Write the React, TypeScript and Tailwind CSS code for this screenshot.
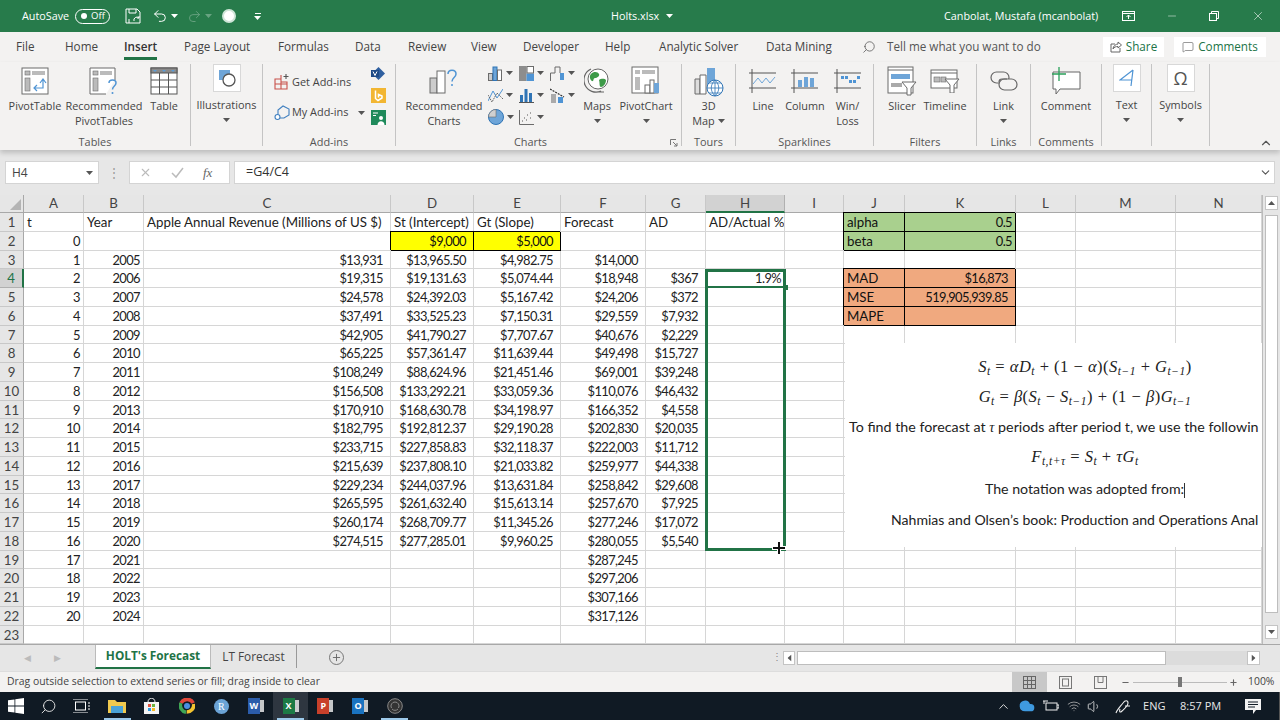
import { Search, Undo2, Redo2, X, Minus, Plus, ChevronUp, ChevronDown, Volume1, Wifi, MessageSquare, Cloud } from 'lucide-react';
import type { ReactNode } from 'react';

const UI = "font-['Open_Sans',sans-serif]";
const SHEET = "font-['Lato',sans-serif]";

const Caret = ({ c = '#555' }: { c?: string }) => (
  <svg width="7" height="4" viewBox="0 0 7 4" className="shrink-0"><path d="M0 0h7L3.5 4z" fill={c} /></svg>
);

const G = '#6b6b6b';
const B = '#4f94d4';

/* ---------- ribbon icons ---------- */
const PivotIcon = () => (
  <svg width="28" height="28" viewBox="0 0 28 28" fill="none">
    <rect x="1" y="1" width="26" height="26" fill="#fff" stroke={G} />
    <rect x="4" y="4" width="5" height="4" fill="#bbb" stroke={G} strokeWidth=".6" />
    <rect x="11" y="4" width="13" height="4" fill="#bbb" />
    <rect x="4" y="11" width="5" height="13" fill="#bbb" stroke={G} strokeWidth=".6" />
    <path d="M13 21h9v-8m-3 3l3-4 3 4M16 18l-3 3 3 3" stroke={B} strokeWidth="1.2" />
  </svg>
);
const RecPivotIcon = () => (
  <svg width="30" height="30" viewBox="0 0 30 30" fill="none">
    <path d="M26 14V2H1v26h16" fill="#fff" stroke={G} />
    <rect x="4" y="5" width="5" height="4" fill="#bbb" stroke={G} strokeWidth=".6" />
    <rect x="11" y="5" width="12" height="4" fill="#bbb" />
    <rect x="4" y="12" width="5" height="13" fill="#bbb" stroke={G} strokeWidth=".6" />
    <path d="M20 17c0-4 7-4 7 0 0 3-3.500 3-3.500 6.500" stroke={B} strokeWidth="1.500" />
    <circle cx="23.500" cy="27" r="1" fill={B} />
  </svg>
);
const TableIcon = () => (
  <svg width="28" height="28" viewBox="0 0 28 28" fill="none" stroke="#555">
    <rect x="1" y="1" width="26" height="26" fill="#fff" />
    <rect x="1" y="1" width="26" height="5" fill="#8a8a8a" />
    <path d="M1 13h26M1 20h26M9.500 6v21M18.500 6v21" />
    <path d="M3 3h4l-2 2zM12 3h4l-2 2zM21 3h4l-2 2z" fill="#5b9bd5" stroke="none" />
  </svg>
);
const ShapesIcon = () => (
  <svg width="20" height="20" viewBox="0 0 20 20" fill="none">
    <rect x="2" y="2" width="11" height="10" fill="#6ea5d8" />
    <circle cx="12" cy="12" r="6" fill="#fff" stroke="#555" strokeWidth="1.300" />
  </svg>
);
const GetAddIns = () => (
  <svg width="16" height="16" viewBox="0 0 16 16" fill="none" stroke="#c8504a" strokeWidth="1.100">
    <path d="M1 5h6v10H1zM7 8h6v7H7zM1 10h12M7 1v4" />
    <path d="M12 0v5M9.500 2.500h5" stroke="#555" />
  </svg>
);
const MyAddIns = () => (
  <svg width="16" height="16" viewBox="0 0 16 16" fill="none" stroke="#3f7fbf" strokeWidth="1.100">
    <path d="M4 9V5l5-4 6 3v6l-5 3H6" />
    <circle cx="3.500" cy="12" r="2.500" fill="#fff" />
  </svg>
);
const Visio = () => (
  <svg width="15" height="15" viewBox="0 0 15 15"><path d="M7.500 1L14 7.500 7.500 14 1 7.500z" fill="#2f5f9f" /><path d="M0 4h8v7H0z" fill="#1f4b87" /><path d="M2 5.500l2 4 2-4" stroke="#fff" fill="none" /></svg>
);
const Bing = () => (
  <svg width="15" height="15" viewBox="0 0 15 15"><rect width="15" height="15" fill="#f2b632" /><path d="M4.500 2.500v8l2.500 2 4-2.500v-2L7.500 6.500v3" stroke="#fff" strokeWidth="1.500" fill="none" /></svg>
);
const People = () => (
  <svg width="15" height="15" viewBox="0 0 15 15"><rect width="15" height="15" fill="#1f8a5b" /><circle cx="10" cy="8" r="2" fill="#fff" /><path d="M6.500 15c0-5 7-5 7 0z" fill="#fff" /><path d="M2 3h5M2 5.500h3" stroke="#fff" /></svg>
);
const RecChart = () => (
  <svg width="30" height="30" viewBox="0 0 30 30" fill="none">
    <rect x="1" y="12" width="7" height="15" fill="#ccc" stroke={G} />
    <rect x="8" y="5" width="8" height="22" fill="#fff" stroke={G} />
    <path d="M19 8c0-5 8-5 8 0 0 3.500-4 3.500-4 7.500" stroke={B} strokeWidth="1.500" />
    <circle cx="23" cy="19" r="1" fill={B} />
  </svg>
);
const MiniBars = () => (
  <svg width="15" height="15" viewBox="0 0 15 15" fill="none" stroke={G}>
    <rect x=".5" y="7.500" width="4" height="7" fill="#ccc" /><rect x="5" y="1" width="4" height="13.500" fill="#6ea5d8" stroke="#2f74b5" /><rect x="9.500" y="4" width="4" height="10.500" fill="#fff" />
  </svg>
);
const MiniHier = () => (
  <svg width="15" height="15" viewBox="0 0 15 15"><rect x="0" y="0" width="7.500" height="15" fill="#8d8d8d" /><rect x="7.500" y="7.500" width="7.500" height="7.500" fill="#4f94d4" /><rect x="8" y=".5" width="6.500" height="6.500" fill="#fff" stroke={G} /></svg>
);
const MiniFall = () => (
  <svg width="15" height="15" viewBox="0 0 15 15" fill="none" stroke={G}><path d="M.5 15V7H5V1h5v6" /><rect x="10" y="7" width="4" height="7" fill="#4f94d4" stroke="none" /></svg>
);
const MiniLine = () => (
  <svg width="15" height="15" viewBox="0 0 15 15" fill="none"><path d="M0 13L5 3l4 7 6-9" stroke="#4f94d4" /><path d="M0 7l4 7 5-9 6 6" stroke="#666" strokeDasharray="1.500 .8" /></svg>
);
const MiniBlue = () => (
  <svg width="15" height="15" viewBox="0 0 15 15"><rect x="1" y="7" width="3" height="7" fill="#2f74b5" /><rect x="5.500" y="1" width="3" height="13" fill="#2f74b5" /><rect x="10" y="5" width="3" height="9" fill="#2f74b5" /><path d="M0 14.500h15" stroke="#555" /></svg>
);
const MiniCombo = () => (
  <svg width="15" height="15" viewBox="0 0 15 15" fill="none"><rect x="1" y="6" width="5" height="9" fill="#aaa" /><rect x="8" y="9" width="5" height="6" fill="#4f94d4" /><path d="M0 1l7 4 7 4" stroke="#333" strokeWidth="1.300" strokeDasharray="2 1" /></svg>
);
const MiniPie = () => (
  <svg width="16" height="16" viewBox="0 0 16 16"><circle cx="8" cy="8" r="7.500" fill="#6ea5d8" stroke="#2f74b5" /><path d="M8 8V.5A7.500 7.500 0 0 0 .5 8z" fill="#d0d0d0" stroke={G} strokeWidth=".6" /></svg>
);
const MiniScatter = () => (
  <svg width="15" height="15" viewBox="0 0 15 15" fill="none"><path d="M.5 0v14.500H15" stroke={G} /><path d="M3 11h1M5 8h1M7 10h1M8 5h1M11 3h1M11 8h1" stroke="#555" /></svg>
);
const Globe = () => (
  <svg width="26" height="30" viewBox="0 0 26 30" fill="none">
    <circle cx="14" cy="13" r="10" fill="#fff" stroke="#666" />
    <path d="M7 8c3-3 7-2 8 0s-2 4-4 4-1 4-3 3-3-5-1-7zM15 14c3-2 6-1 7 0 0 4-3 7-5 7s-1-4-2-7z" fill="#3d9a48" />
    <path d="M7 3a12 12 0 0 0 10 22M12 26h8M16 25v1" stroke="#666" strokeWidth="1.200" />
  </svg>
);
const PivotChart = () => (
  <svg width="30" height="30" viewBox="0 0 30 30" fill="none">
    <rect x="1" y="1" width="26" height="26" fill="#fff" stroke={G} />
    <rect x="4" y="4" width="5" height="4" fill="#bbb" /><rect x="11" y="4" width="13" height="4" fill="#bbb" /><rect x="4" y="11" width="5" height="13" fill="#bbb" />
    <rect x="14" y="19" width="5" height="8" fill="#fff" stroke={G} /><rect x="19" y="14" width="4" height="13" fill="#fff" stroke={G} /><rect x="23" y="17" width="5" height="10" fill="#6ea5d8" />
  </svg>
);
const Map3D = () => (
  <svg width="30" height="30" viewBox="0 0 30 30" fill="none">
    <path d="M1 12h5v15H1z" fill="#ddd" stroke={G} />
    <path d="M6 8h6v19H6z" fill="#fff" stroke={G} />
    <path d="M13 1h8v17h-8z" fill="#6ea5d8" />
    <circle cx="21" cy="21" r="8" fill="#fff" stroke="#2f74b5" />
    <path d="M13 21h16M21 13v16M15 16h12M15 26h12M21 13c-5 5-5 11 0 16M21 13c5 5 5 11 0 16" stroke="#2f74b5" strokeWidth=".8" />
  </svg>
);
const SparkFrame = ({ children }: { children: ReactNode }) => (
  <svg width="28" height="24" viewBox="0 0 28 24" fill="none">
    <path d="M0 4h27M0 19h27M3 0v24" stroke="#555" />
    {children}
  </svg>
);
const Slicer = () => (
  <svg width="30" height="30" viewBox="0 0 30 30" fill="none">
    <rect x="1" y="1" width="25" height="26" fill="#fff" stroke={G} />
    <path d="M1 4h25" stroke={G} />
    <rect x="4" y="8" width="19" height="5" fill="#6ea5d8" />
    <rect x="4" y="17" width="11" height="4" fill="#aaa" />
    <path d="M15 16h14l-5 6v7h-4v-7z" fill="#fff" stroke={G} />
  </svg>
);
const Timeline = () => (
  <svg width="30" height="24" viewBox="0 0 30 24" fill="none">
    <rect x="1" y="1" width="26" height="18" fill="#fff" stroke={G} />
    <path d="M1 4h26" stroke={G} />
    <rect x="4" y="8" width="6" height="5" fill="#bbb" stroke={G} strokeWidth=".6" />
    <rect x="11" y="8" width="5" height="5" fill="#bbb" stroke={G} strokeWidth=".6" />
    <path d="M15 10h14l-5 6v8h-4v-8z" fill="#fff" stroke={G} />
  </svg>
);
const LinkIcon = () => (
  <svg width="28" height="20" viewBox="0 0 28 20" fill="none" stroke="#666" strokeWidth="1.200">
    <rect x="1" y="1" width="18" height="11" rx="5.500" />
    <rect x="9" y="8" width="18" height="11" rx="5.500" fill="#f3f2f1" />
    <path d="M9 11c0-2 1-3 3-3h5" />
  </svg>
);
const CommentIcon = () => (
  <svg width="30" height="28" viewBox="0 0 30 28" fill="none">
    <path d="M2 5h27v17H9l-4 5v-5H2z" fill="#fff" stroke="#666" />
    <path d="M8 0v14M1 7h14" stroke="#2aa05a" strokeWidth="1.300" />
  </svg>
);

/* ---------- ribbon pieces ---------- */
const Large = ({ w, icon, lines, caret }: { w: string; icon: ReactNode; lines: string[]; caret?: boolean }) => (
  <div className={`${w} flex flex-col items-center pt-[3px] leading-[15px]`}>
    <div className="h-[28px] flex items-center justify-center">{icon}</div>
    <div className="mt-[3px] text-center whitespace-nowrap">{lines[0]}</div>
    {lines[1] && <div className="text-center whitespace-nowrap">{lines[1]}</div>}
    {caret && <div className="mt-[6px]"><Caret /></div>}
  </div>
);
const Boxed = ({ w, icon, label }: { w: string; icon: ReactNode; label: string }) => (
  <div className={`${w} flex flex-col items-center leading-[15px]`}>
    <div className="w-[28px] h-[28px] bg-white border border-[#d8d8d8] flex items-center justify-center">{icon}</div>
    <div className="mt-[5px] whitespace-nowrap">{label}</div>
    <div className="mt-[6px]"><Caret /></div>
  </div>
);
const Group = ({ w, label, labelCls, children }: { w: string; label?: string; labelCls?: string; children: ReactNode }) => (
  <div className={`${w} h-[82px] shrink-0 flex flex-col border-r border-[#c4c4c4]`}>
    <div className="flex-1 flex min-h-0">{children}</div>
    <div className={`h-[8px] leading-[8px] text-center text-[#555] whitespace-nowrap ${labelCls ?? ''}`}>{label}</div>
  </div>
);
const MiniChart = ({ icon }: { icon: ReactNode }) => (
  <div className="w-[31px] h-[18px] flex items-center gap-[3px]">{icon}<Caret /></div>
);

const tabs = [
  ['File', 'w-[22px]'], ['Home', 'w-[32px]'], ['Insert', 'w-[33px]'], ['Page Layout', 'w-[67px]'],
  ['Formulas', 'w-[50px]'], ['Data', 'w-[26px]'], ['Review', 'w-[36px]'], ['View', 'w-[25px]'],
  ['Developer', 'w-[55px]'], ['Help', 'w-[27px]'], ['Analytic Solver', 'w-[80px]'], ['Data Mining', 'w-[67px]'],
];

function TitleBar() {
  return (
    <div className={`h-[32px] shrink-0 bg-[#277b4b] text-white flex items-center text-[10.800px] ${UI}`}>
      <div className="w-[611px] flex items-center pl-[22px]">
        <span className="w-[46px] whitespace-nowrap">AutoSave</span>
        <div className="ml-[7px] w-[35px] h-[15px] rounded-full border border-white flex items-center pl-[5px] gap-[4px] text-[9.500px]">
          <span className="w-[6px] h-[6px] rounded-full bg-white" />Off
        </div>
        <svg className="ml-[15px]" width="16" height="16" viewBox="0 0 16 16" fill="none" stroke="#fff"><path d="M1 1h11l3 3v11H1zM4 1v4h7V1M4 15v-4" /><path d="M9 13a3 3 0 0 1 5-3M14 8v2h-2" /></svg>
        <Undo2 className="ml-[11px]" size={16} strokeWidth={1.500} />
        <span className="ml-[3px]"><Caret c="#fff" /></span>
        <Redo2 className="ml-[9px] opacity-30" size={15} strokeWidth={1.500} />
        <span className="ml-[3px] opacity-30"><Caret c="#fff" /></span>
        <span className="ml-[10px] w-[14px] h-[14px] rounded-full bg-white border-2 border-[#cfe5d8]" />
        <span className="ml-[18px] flex flex-col items-center gap-[2px]"><span className="w-[6px] h-px bg-white" /><Caret c="#fff" /></span>
      </div>
      <div className="w-[333px] flex items-center gap-[7px] whitespace-nowrap">Holts.xlsx <Caret c="#fff" /></div>
      <div className="flex-1 flex items-center">
        <span className="w-[154px] whitespace-nowrap">Canbolat, Mustafa (mcanbolat)</span>
        <svg className="ml-[24px]" width="13" height="10" viewBox="0 0 13 10" fill="none" stroke="#fff"><rect x=".5" y=".5" width="12" height="9" /><path d="M.5 2.500h12M6.500 8V4M4.500 6l2-2 2 2" /></svg>
        <Minus className="ml-[31px]" size={12} strokeWidth={1} />
        <svg className="ml-[31px]" width="10" height="10" viewBox="0 0 10 10" fill="none" stroke="#fff"><rect x=".5" y="2.500" width="7" height="7" /><path d="M2.500 2.500v-2h7v7h-2" /></svg>
        <X className="ml-[32px]" size={14} strokeWidth={1} />
      </div>
    </div>
  );
}

function TabRow() {
  return (
    <div className={`h-[30px] shrink-0 bg-[#f3f2f1] flex items-center pl-[16px] gap-[27px] text-[11.700px] text-[#444] ${UI}`}>
      {tabs.map(([t, w]) => (
        <div key={t} className={`${w} relative whitespace-nowrap ${t === 'Insert' ? 'font-semibold text-[#333]' : ''}`}>
          {t}
          {t === 'Insert' && <span className="absolute left-0 right-0 top-[19px] h-[3px] bg-[#217346]" />}
        </div>
      ))}
      <div className="flex items-center ml-[2px]">
        <Search size={14} strokeWidth={1.300} className="-scale-x-100 text-[#555]" />
        <span className="ml-[11px] whitespace-nowrap w-[155px] text-[#555]">Tell me what you want to do</span>
      </div>
      <div className="flex items-center gap-[10px] ml-[34px]">
        <div className="h-[20px] w-[61px] bg-white flex items-center justify-center gap-[4px] text-[#217346]">
          <svg width="12" height="12" viewBox="0 0 12 12" fill="none" stroke="#666"><path d="M5 3H1v8h9V7M3 8c0-3 3-5 5-5V1l3.500 3L8 7V5.500C6 5.500 4 6 3 8z" /></svg>
          Share
        </div>
        <div className="h-[20px] w-[92px] bg-white flex items-center justify-center gap-[4px] text-[#217346]">
          <MessageSquare size={12} strokeWidth={1.200} className="text-[#555]" />
          Comments
        </div>
      </div>
    </div>
  );
}

function Ribbon() {
  return (
    <div className={`h-[88px] shrink-0 bg-[#f3f2f1] flex pt-[2px] relative z-10 shadow-[0_3px_5px_rgba(0,0,0,.18)] text-[10.900px] text-[#444] ${UI}`}>
      <Group w="w-[191px]" label="Tables">
        <div className="w-[2px]" />
        <Large w="w-[66px]" icon={<PivotIcon />} lines={['PivotTable']} />
        <Large w="w-[72px]" icon={<RecPivotIcon />} lines={['Recommended', 'PivotTables']} />
        <Large w="w-[48px]" icon={<TableIcon />} lines={['Table']} />
      </Group>
      <Group w="w-[72px]">
        <Boxed w="w-full" icon={<ShapesIcon />} label="Illustrations" />
      </Group>
      <Group w="w-[133px]" label="Add-ins">
        <div className="flex flex-col pl-[11px] pt-[10px] gap-[14px] w-[108px]">
          <div className="flex items-center gap-[2px] whitespace-nowrap"><GetAddIns />Get Add-ins</div>
          <div className="flex items-center gap-[2px] whitespace-nowrap"><MyAddIns />My Add-ins <span className="ml-[8px]"><Caret /></span></div>
        </div>
        <div className="flex flex-col gap-[7px] pt-[2px]"><Visio /><Bing /><People /></div>
      </Group>
      <Group w="w-[286px]" label="Charts" labelCls="relative pr-[16px]">
        <div className="w-[10px]" />
        <Large w="w-[76px]" icon={<RecChart />} lines={['Recommended', 'Charts']} />
        <div className="ml-[6px] w-[90px] grid grid-cols-[31px_31px_28px] auto-rows-[18px] gap-y-[4px]">
          <MiniChart icon={<MiniBars />} /><MiniChart icon={<MiniHier />} /><MiniChart icon={<MiniFall />} />
          <MiniChart icon={<MiniLine />} /><MiniChart icon={<MiniBlue />} /><MiniChart icon={<MiniCombo />} />
          <MiniChart icon={<MiniPie />} /><MiniChart icon={<MiniScatter />} />
        </div>
        <Large w="w-[38px]" icon={<Globe />} lines={['Maps']} caret />
        <Large w="w-[60px]" icon={<PivotChart />} lines={['PivotChart']} caret />
      </Group>
      <Group w="w-[54px]" label="Tours">
        <div className="w-full flex flex-col items-center pt-[3px] leading-[15px]">
          <div className="h-[28px]"><Map3D /></div>
          <div className="mt-[3px]">3D</div>
          <div className="flex items-center gap-[3px]">Map <Caret /></div>
        </div>
      </Group>
      <Group w="w-[138px]" label="Sparklines">
        <div className="w-[6px]" />
        <Large w="w-[42px]" icon={<SparkFrame><path d="M4 15l5-6 4 5 4-5 4 5 5-6" stroke="#6ea5d8" /></SparkFrame>} lines={['Line']} />
        <Large w="w-[42px]" icon={<SparkFrame><rect x="7" y="11" width="4" height="7" fill="#6ea5d8" /><rect x="13" y="8" width="4" height="10" fill="#6ea5d8" /><rect x="19" y="9" width="4" height="9" fill="#6ea5d8" /></SparkFrame>} lines={['Column']} />
        <Large w="w-[43px]" icon={<SparkFrame><path d="M7 7h3v3H7zM11 7h3v3h-3zM15 11h3v3h-3zM19 11h3v3h-3zM23 7h3v3h-3z" fill="#4f94d4" /></SparkFrame>} lines={['Win/', 'Loss']} />
      </Group>
      <Group w="w-[103px]" label="Filters">
        <div className="w-[7px]" />
        <Large w="w-[42px]" icon={<Slicer />} lines={['Slicer']} />
        <Large w="w-[44px]" icon={<Timeline />} lines={['Timeline']} />
      </Group>
      <Group w="w-[54px]" label="Links">
        <Large w="w-full" icon={<LinkIcon />} lines={['Link']} caret />
      </Group>
      <Group w="w-[71px]" label="Comments">
        <Large w="w-full" icon={<CommentIcon />} lines={['Comment']} />
      </Group>
      <Group w="w-[50px]">
        <Boxed w="w-full" icon={<svg width="16" height="18" viewBox="0 0 16 18" fill="none" stroke="#4f94d4" strokeWidth="1.200"><path d="M14 1L1 11h12M14 1l-2 16" /></svg>} label="Text" />
      </Group>
      <Group w="w-[58px]">
        <Boxed w="w-full" icon={<span className="text-[18px] text-[#555]">Ω</span>} label="Symbols" />
      </Group>
      <ChevronUp size={14} className="absolute left-[1259px] top-[74px] text-[#555]" />
      <svg className="absolute left-[670px] top-[77px]" width="8" height="8" viewBox="0 0 8 8" fill="none" stroke="#777"><path d="M.5 6V.5H6M3 3l4 4M7 4v3H4" /></svg>
    </div>
  );
}

function FormulaBar() {
  return (
    <div className={`h-[45px] shrink-0 bg-[#e7e7e7] flex pt-[11px] pl-[5px] text-[#444] text-[12px] ${UI}`}>
      <div className="w-[94px] h-[23px] bg-white border border-[#d4d4d4] flex items-center justify-between pl-[6px] pr-[5px]">H4<Caret /></div>
      <div className="w-[30px] h-[23px] flex items-center justify-center text-[#999] tracking-tighter">⋮</div>
      <div className="w-[101px] h-[23px] bg-white border border-[#d4d4d4] flex items-center text-[#bbb] pl-[9px]">
        <X size={13} /><svg className="ml-[19px]" width="13" height="13" viewBox="0 0 13 13" fill="none" stroke="#bbb" strokeWidth="1.500"><path d="M1 7l4 4 7-9" /></svg>
        <span className="ml-[19px] font-['Liberation_Serif',serif] italic text-[13px] text-[#666]">fx</span>
      </div>
      <div className="ml-[4px] w-[1041px] h-[23px] bg-white border border-[#d4d4d4] flex items-center justify-between pl-[11px] pr-[2px] text-[12.500px] text-[#333]">
        =G4/C4<ChevronDown size={13} className="text-[#555]" />
      </div>
    </div>
  );
}

/* ---------- sheet ---------- */
const COLS = ['A', 'B', 'C', 'D', 'E', 'F', 'G', 'H', 'I', 'J', 'K', 'L', 'M', 'N'];
const BODY: string[][] = [
  ['1', '2005', '$13,931', '$13,965.50', '$4,982.75', '$14,000'],
  ['2', '2006', '$19,315', '$19,131.63', '$5,074.44', '$18,948', '$367', '1.9%'],
  ['3', '2007', '$24,578', '$24,392.03', '$5,167.42', '$24,206', '$372'],
  ['4', '2008', '$37,491', '$33,525.23', '$7,150.31', '$29,559', '$7,932'],
  ['5', '2009', '$42,905', '$41,790.27', '$7,707.67', '$40,676', '$2,229'],
  ['6', '2010', '$65,225', '$57,361.47', '$11,639.44', '$49,498', '$15,727'],
  ['7', '2011', '$108,249', '$88,624.96', '$21,451.46', '$69,001', '$39,248'],
  ['8', '2012', '$156,508', '$133,292.21', '$33,059.36', '$110,076', '$46,432'],
  ['9', '2013', '$170,910', '$168,630.78', '$34,198.97', '$166,352', '$4,558'],
  ['10', '2014', '$182,795', '$192,812.37', '$29,190.28', '$202,830', '$20,035'],
  ['11', '2015', '$233,715', '$227,858.83', '$32,118.37', '$222,003', '$11,712'],
  ['12', '2016', '$215,639', '$237,808.10', '$21,033.82', '$259,977', '$44,338'],
  ['13', '2017', '$229,234', '$244,037.96', '$13,631.84', '$258,842', '$29,608'],
  ['14', '2018', '$265,595', '$261,632.40', '$15,613.14', '$257,670', '$7,925'],
  ['15', '2019', '$260,174', '$268,709.77', '$11,345.26', '$277,246', '$17,072'],
  ['16', '2020', '$274,515', '$277,285.01', '$9,960.25', '$280,055', '$5,540'],
  ['17', '2021', '', '', '', '$287,245'],
  ['18', '2022', '', '', '', '$297,206'],
  ['19', '2023', '', '', '', '$307,166'],
  ['20', '2024', '', '', '', '$317,126'],
  [],
];
const PAD: Record<string, string> = {
  A: 'pr-[3px]', B: 'pr-[3px]', C: 'pr-[7px]', D: 'pr-[7px]', E: 'pr-[7px]', F: 'pr-[7px]', G: 'pr-[7px]', H: 'pr-[3px]',
};

type CellDef = { text?: string; left?: boolean; fill?: string; pad?: string };
const SPECIAL: Record<string, CellDef> = {
  A1: { text: 't', left: true }, B1: { text: 'Year', left: true },
  C1: { text: 'Apple Annual Revenue (Millions of US $)', left: true },
  D1: { text: 'St (Intercept)', left: true }, E1: { text: 'Gt (Slope)', left: true },
  F1: { text: 'Forecast', left: true }, G1: { text: 'AD', left: true }, H1: { text: 'AD/Actual %', left: true },
  A2: { text: '0', pad: 'pr-[3px]' },
  D2: { text: '$9,000', fill: 'bg-[#ffff00]', pad: 'pr-[7px]' }, E2: { text: '$5,000', fill: 'bg-[#ffff00]', pad: 'pr-[7px]' },
  J1: { text: 'alpha', left: true, fill: 'bg-[#a9d08e]' }, K1: { text: '0.5', fill: 'bg-[#a9d08e]', pad: 'pr-[3px]' },
  J2: { text: 'beta', left: true, fill: 'bg-[#a9d08e]' }, K2: { text: '0.5', fill: 'bg-[#a9d08e]', pad: 'pr-[3px]' },
  J4: { text: 'MAD', left: true, fill: 'bg-[#f0a97f]' }, K4: { text: '$16,873', fill: 'bg-[#f0a97f]', pad: 'pr-[7px]' },
  J5: { text: 'MSE', left: true, fill: 'bg-[#f0a97f]' }, K5: { text: '519,905,939.85', fill: 'bg-[#f0a97f]', pad: 'pr-[7px]' },
  J6: { text: 'MAPE', left: true, fill: 'bg-[#f0a97f]' }, K6: { fill: 'bg-[#f0a97f]' },
};

function cellOf(col: string, row: number): CellDef {
  const hit = SPECIAL[`${col}${row}`];
  if (hit) return hit;
  const idx = COLS.indexOf(col);
  const vals = row >= 3 ? BODY[row - 3] : [];
  return { text: vals[idx], pad: PAD[col] };
}

function Cell({ col, row }: { col: string; row: number }) {
  const c = cellOf(col, row);
  const frame = c.fill
    ? 'border-r border-b border-black shadow-[-1px_-1px_0_0_#000] text-[#111]'
    : 'border-r border-b border-[#d6d6d6] text-[#222]';
  return (
    <div className={`${frame} ${c.fill ?? 'bg-white'} ${c.left ? 'pl-[3px] text-left' : `text-right text-[12.900px] tracking-[-0.6px] ${c.pad ?? ''}`} leading-[18px] whitespace-nowrap overflow-hidden`}>
      {c.text}
    </div>
  );
}

const Sub = ({ children }: { children: ReactNode }) => <sub className="text-[11.500px]">{children}</sub>;
const MATH = "font-['Liberation_Serif',serif] text-[16.500px] tracking-[0.5px] self-center";

function TextBox() {
  return (
    <div className="absolute left-[845px] top-[148px] w-[417px] h-[204px] bg-white text-[#222]">
      <div className="w-[480px] flex flex-col whitespace-nowrap">
        <div className={`h-[30px] mt-[9px] leading-[30px] ${MATH}`}>
          <i>S<Sub>t</Sub></i> = <i>αD<Sub>t</Sub></i> + (1 − <i>α</i>)(<i>S<Sub>t−1</Sub></i> + <i>G<Sub>t−1</Sub></i>)
        </div>
        <div className={`h-[30px] leading-[30px] ${MATH}`}>
          <i>G<Sub>t</Sub></i> = <i>β</i>(<i>S<Sub>t</Sub></i> − <i>S<Sub>t−1</Sub></i>) + (1 − <i>β</i>)<i>G<Sub>t−1</Sub></i>
        </div>
        <div className="h-[29px] leading-[29px] pl-[4px] text-[14.270px]">
          To find the forecast at <i className="font-['Liberation_Serif',serif]">τ</i> periods after period t, we use the followin
        </div>
        <div className={`h-[32px] leading-[32px] ${MATH}`}>
          <i>F<Sub>t,t+τ</Sub></i> = <i>S<Sub>t</Sub></i> + <i>τG<Sub>t</Sub></i>
        </div>
        <div className="h-[31px] leading-[31px] self-center text-[14.200px]">The notation was adopted from:<span className="inline-block w-px h-[15px] bg-[#333] align-middle" /></div>
        <div className="h-[31px] leading-[31px] pl-[46px] text-[14.080px]">Nahmias and Olsen’s book: Production and Operations Anal</div>
      </div>
    </div>
  );
}

function Selection() {
  return (
    <>
      <div className="absolute left-[705px] top-[74px] w-[81px] h-[282px] border-[3px] border-[#217346] pointer-events-none" />
      <div className="absolute left-[705px] top-[91px] w-[81px] h-[2px] bg-[#217346]" />
      <div className="absolute left-[783px] top-[90px] w-[5px] h-[5px] bg-[#217346]" />
      <svg className="absolute left-[771px] top-[345px]" width="16" height="16" viewBox="0 0 16 16">
        <path d="M6 1h4v5h5v4h-5v5H6v-5H1V6h5z" fill="#fff" />
        <path d="M7 2h2v5h5v2H9v5H7V9H2V7h5z" fill="#111" />
      </svg>
    </>
  );
}

function Sheet() {
  return (
    <div className="flex h-[449px] shrink-0 bg-white overflow-hidden">
      <div className={`relative w-[1262px] overflow-hidden text-[13.300px] ${SHEET}`}>
        <div className="grid grid-cols-[24px_60px_60px_247px_83px_87px_85px_60px_79px_59px_61px_111px_60px_100px_86px] grid-rows-[18px] auto-rows-[18.750px]">
          <div className="bg-[#e6e6e6] border-r border-b border-[#a8a8a8] relative">
            <svg className="absolute right-[2px] bottom-[2px]" width="11" height="11" viewBox="0 0 11 11"><path d="M11 0v11H0z" fill="#b4b4b4" /></svg>
          </div>
          {COLS.map((c) => (
            <div key={c} className={`border-b border-r text-center leading-[17px] text-[#444] ${c === 'H' ? 'bg-[#d2d2d2] border-b-2 border-b-[#217346] border-r-[#b0b0b0]' : 'bg-[#e6e6e6] border-b-[#a8a8a8] border-r-[#c8c8c8]'}`}>{c}</div>
          ))}
          {Array.from({ length: 23 }, (_, i) => i + 1).map((r) => (
            <div key={r} className="contents">
              <div className={`border-b border-r text-center leading-[18px] ${r === 4 ? 'bg-[#d2d2d2] text-[#217346] border-r-2 border-r-[#217346] border-b-[#b0b0b0]' : 'bg-[#e6e6e6] text-[#444] border-r-[#a8a8a8] border-b-[#c8c8c8]'}`}>{r}</div>
              {COLS.map((c) => <Cell key={c} col={c} row={r} />)}
            </div>
          ))}
        </div>
        <TextBox />
        <Selection />
      </div>
      <div className="w-[18px] bg-[#e6e6e6] border-l border-[#bbb] flex flex-col items-center pt-[1px] pb-[5px]">
        <div className="w-[13px] h-[14px] bg-white border border-[#c4c4c4] flex items-center justify-center rotate-180"><Caret /></div>
        <div className="w-[13px] h-[398px] mt-[5px] bg-white border border-[#bdbdbd]" />
        <div className="mt-auto w-[13px] h-[14px] bg-white border border-[#c4c4c4] flex items-center justify-center"><Caret /></div>
      </div>
    </div>
  );
}

function SheetTabs() {
  return (
    <div className={`h-[27px] shrink-0 bg-[#e6e6e6] border-t border-[#a8a8a8] flex text-[11.800px] ${UI}`}>
      <div className="w-[95px] flex items-center text-[#bbb] text-[9px] pl-[24px] gap-[23px]"><span>◀</span><span>▶</span></div>
      <div className="w-[116px] h-[24px] bg-white border-b-2 border-[#217346] border-l border-r border-l-[#bbb] border-r-[#bbb] flex items-center justify-center font-bold text-[#217346] whitespace-nowrap">HOLT's Forecast</div>
      <div className="w-[86px] h-[23px] border-r border-[#999] flex items-center justify-center text-[#444] whitespace-nowrap">LT Forecast</div>
      <div className="ml-[32px] w-[15px] h-[15px] mt-[5px] rounded-full border border-[#777] flex items-center justify-center"><Plus size={11} className="text-[#666]" /></div>
      <div className="ml-[428px] flex items-center h-[23px] text-[#888] text-[10px] w-[10px]">⋮</div>
      <div className="ml-[1px] h-[23px] flex items-center w-[477px] pt-[2px]">
        <div className="w-[12px] h-[14px] bg-white border border-[#c4c4c4] flex items-center justify-center"><span className="rotate-90"><Caret /></span></div>
        <div className="w-[369px] h-[14px] ml-[2px] bg-white border border-[#bdbdbd]" />
        <div className="flex-1 h-[14px] bg-[#dcdcdc]" />
        <div className="w-[13px] h-[14px] bg-white border border-[#c4c4c4] flex items-center justify-center"><span className="-rotate-90"><Caret /></span></div>
      </div>
    </div>
  );
}

function StatusBar() {
  return (
    <div className={`h-[21px] shrink-0 bg-[#f3f2f1] border-t border-[#ddd] flex items-center pl-[7px] text-[10.400px] text-[#444] ${UI}`}>
      <span className="w-[1005px] whitespace-nowrap">Drag outside selection to extend series or fill; drag inside to clear</span>
      <div className="w-[35px] h-[21px] bg-[#c8c8c8] flex items-center justify-center">
        <svg width="13" height="13" viewBox="0 0 13 13" fill="none" stroke="#666"><rect x=".5" y=".5" width="12" height="12" /><path d="M.5 4.500h12M.5 8.500h12M4.500 .5v12M8.500 .5v12" /></svg>
      </div>
      <svg className="ml-[12px]" width="13" height="13" viewBox="0 0 13 13" fill="none" stroke="#777"><rect x=".5" y=".5" width="12" height="12" /><rect x="3.500" y="3" width="6" height="7" /></svg>
      <svg className="ml-[22px]" width="13" height="13" viewBox="0 0 13 13" fill="none" stroke="#777"><rect x=".5" y=".5" width="12" height="12" /><path d="M4 .5v6h5v-6" /></svg>
      <Minus size={9} strokeWidth={3} className="ml-[14px] text-[#666]" />
      <div className="ml-[3px] w-[94px] h-px bg-[#bbb] relative"><span className="absolute left-[45px] -top-[5px] w-[4px] h-[10px] bg-[#777]" /></div>
      <Plus size={9} strokeWidth={3} className="ml-[2px] text-[#666]" />
      <span className="ml-[10px] whitespace-nowrap">100%</span>
    </div>
  );
}

/* ---------- taskbar ---------- */
const TaskSlot = ({ on, hi, children }: { on?: boolean; hi?: boolean; children: ReactNode }) => (
  <div className={`w-[34.700px] h-[28px] shrink-0 flex items-center justify-center relative ${hi ? 'bg-[#2e3640]' : ''}`}>
    {children}
    {on && <span className="absolute left-[4px] right-[4px] bottom-0 h-[2px] bg-[#9cc9ea]" />}
  </div>
);
const OfficeIcon = ({ bg, letter }: { bg: string; letter: string }) => (
  <div className="relative w-[16px] h-[16px]">
    <div className="absolute right-0 top-[2px] w-[9px] h-[12px] bg-[#f2f2f2] opacity-80" />
    <div className={`absolute left-0 top-0 w-[12px] h-[16px] ${bg} text-white text-[9px] font-bold leading-[16px] text-center`}>{letter}</div>
  </div>
);

function Taskbar() {
  return (
    <div className={`h-[28px] shrink-0 bg-[#101a24] flex items-center text-[11px] text-[#e8e8e8] ${UI}`}>
      <div className="w-[34px] flex justify-center">
        <svg width="16" height="16" viewBox="0 0 16 16" fill="#fff"><path d="M0 2.300l6.500-.9v6.200H0zM7.300 1.300L16 0v7.600H7.300zM0 8.400h6.500v6.200L0 13.700zM7.300 8.400H16V16l-8.700-1.200z" /></svg>
      </div>
      <div className="w-[33px] flex justify-center"><Search size={17} strokeWidth={1.300} className="-scale-x-100" /></div>
      <div className="w-[34px] flex justify-center">
        <svg width="17" height="14" viewBox="0 0 17 14" fill="none" stroke="#fff"><rect x="2.500" y="3" width="10" height="8" /><path d="M0 0h15M0 14h15M15 4h2M15 7h2M15 10h2" /></svg>
      </div>
      <div className="w-[2px]" />
      <TaskSlot on>
        <svg width="18" height="15" viewBox="0 0 18 15"><path d="M0 1h7l2 2h9v11H0z" fill="#f0c94e" /><path d="M3 7h12v7H3z" fill="#4aa3d8" /></svg>
      </TaskSlot>
      <TaskSlot>
        <svg width="15" height="16" viewBox="0 0 15 16"><path d="M0 4h15v12H0z" fill="#f4f4f4" /><path d="M4 4c0-5 7-5 7 0" stroke="#f4f4f4" fill="none" /><rect x="4" y="6" width="3" height="3" fill="#e5533d" /><rect x="8" y="6" width="3" height="3" fill="#6cb33f" /><rect x="4" y="10" width="3" height="3" fill="#2f9be0" /><rect x="8" y="10" width="3" height="3" fill="#f5b81f" /></svg>
      </TaskSlot>
      <TaskSlot>
        <svg width="16" height="16" viewBox="0 0 16 16" fill="none" strokeWidth="3.600">
          <path d="M2 5a7 7 0 0 1 12.300 0" stroke="#e0483a" /><path d="M14.700 6a7 7 0 0 1-7 8" stroke="#f4c430" /><path d="M7 14.200A7 7 0 0 1 1.700 5" stroke="#3ea655" />
          <circle cx="8" cy="8" r="3" fill="#4a90e2" stroke="none" />
        </svg>
      </TaskSlot>
      <TaskSlot>
        <div className="w-[15px] h-[15px] rounded-full bg-[#6ba3d6] text-white text-[10px] leading-[15px] text-center font-['Liberation_Serif',serif]">R</div>
      </TaskSlot>
      <TaskSlot><OfficeIcon bg="bg-[#2b5caa]" letter="W" /></TaskSlot>
      <TaskSlot on hi><OfficeIcon bg="bg-[#1d7a45]" letter="X" /></TaskSlot>
      <TaskSlot><OfficeIcon bg="bg-[#c8402a]" letter="P" /></TaskSlot>
      <TaskSlot><OfficeIcon bg="bg-[#1a73c0]" letter="O" /></TaskSlot>
      <TaskSlot on>
        <svg width="16" height="16" viewBox="0 0 16 16" fill="none"><circle cx="8" cy="8" r="7.300" fill="#333" stroke="#888" /><path d="M8 4a4 4 0 0 1 3.500 6M4.500 10A4 4 0 0 1 8 4M11 11a4 4 0 0 1-6 0" stroke="#888" /></svg>
      </TaskSlot>
      <div className="ml-[584px] flex items-center">
        <ChevronUp size={15} strokeWidth={1.500} />
        <Cloud size={16} fill="#3f9ae0" stroke="#3f9ae0" className="ml-[8px]" />
        <svg className="ml-[8px]" width="16" height="12" viewBox="0 0 16 12" fill="none" stroke="#eee"><rect x="3" y="3" width="11" height="7" /><path d="M14 5h2v3h-2M0 1h5M1 1v3" /></svg>
        <Wifi size={14} strokeWidth={1.300} className="ml-[8px] text-[#bbb]" />
        <Volume1 size={15} strokeWidth={1.300} className="ml-[6px]" />
        <svg className="ml-[13px]" width="16" height="16" viewBox="0 0 16 16" fill="none" stroke="#eee" strokeWidth="1.100"><path d="M1 15c1-3 3-5 7-10 2-3 5-3 5 0s-4 6-6 8-3 1-2-2M10 8h5" /></svg>
        <span className="ml-[12px] w-[27px] whitespace-nowrap">ENG</span>
        <span className="ml-[10px] w-[47px] whitespace-nowrap">8:57 PM</span>
        <svg className="ml-[18px]" width="16" height="15" viewBox="0 0 16 15"><path d="M0 0h16v11h-5l-3 4v-4H0z" fill="#f2f2f2" /><path d="M3 3h10M3 5.500h10M3 8h7" stroke="#101a24" /></svg>
        <span className="ml-[18px] w-px h-[28px] bg-[#555]" />
      </div>
    </div>
  );
}

export default function App() {
  return (
    <div className="w-[1280px] h-[720px] overflow-hidden flex flex-col bg-[#e6e6e6]">
      <TitleBar />
      <TabRow />
      <Ribbon />
      <FormulaBar />
      <Sheet />
      <SheetTabs />
      <StatusBar />
      <Taskbar />
    </div>
  );
}
